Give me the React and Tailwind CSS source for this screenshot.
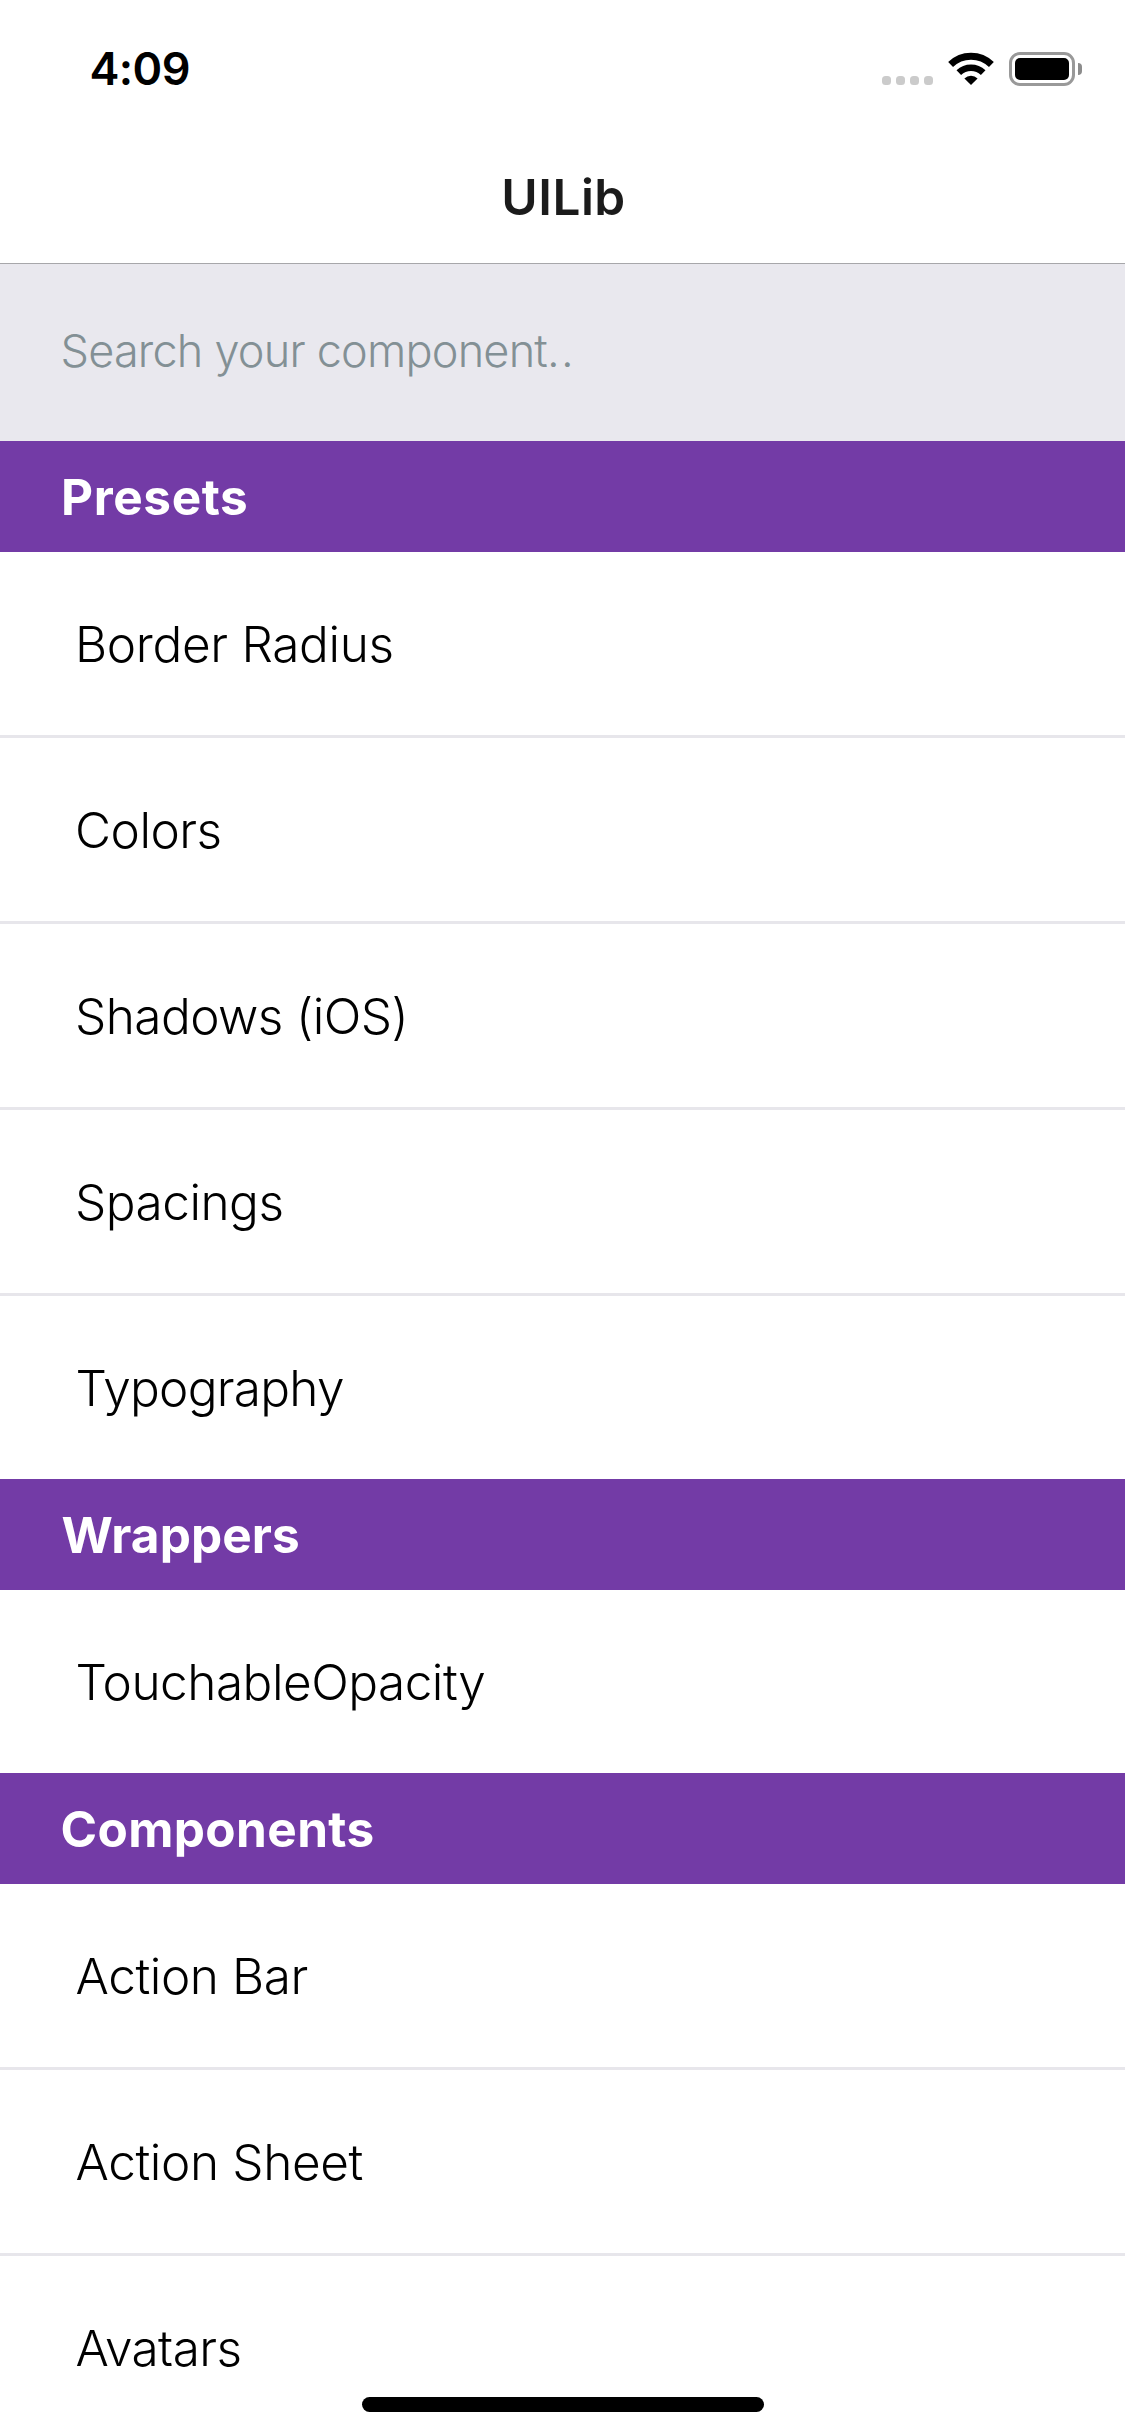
import React from "react";

const sections = [
  {
    title: "Presets",
    tracking: "tracking-[0.6px] pl-[61px]",
    items: [
      { label: "Border Radius", tracking: "tracking-[-0.32px] pl-[75px]" },
      { label: "Colors", tracking: "tracking-[-0.5px] pl-[75px]" },
      { label: "Shadows (iOS)", tracking: "tracking-[-0.57px] pl-[75px]" },
      { label: "Spacings", tracking: "tracking-[-0.5px] pl-[75px]" },
      { label: "Typography", tracking: "tracking-[-0.73px] pl-[75.5px]" },
    ],
  },
  {
    title: "Wrappers",
    tracking: "tracking-[0.08px] pl-[61.5px]",
    items: [{ label: "TouchableOpacity", tracking: "tracking-[-0.5px] pl-[75.5px]" }],
  },
  {
    title: "Components",
    tracking: "tracking-[0.38px] pl-[60.5px]",
    items: [
      { label: "Action Bar", tracking: "tracking-[-0.42px] pl-[75.5px]" },
      { label: "Action Sheet", tracking: "tracking-[-0.39px] pl-[75.5px]" },
      { label: "Avatars", tracking: "tracking-[-0.55px] pl-[75.5px]" },
    ],
  },
];

function WifiIcon() {
  return (
    <svg className="ml-[15px] h-[33px] w-[46px]" viewBox="0 0 46 33" fill="none" stroke="#000">
      <path d="M2.6 12.4 A29.3 29.3 0 0 1 43.4 12.4" strokeWidth="7" />
      <path d="M10.8 20.7 A17.6 17.6 0 0 1 35.2 20.7" strokeWidth="6.6" />
      <path d="M16.4 26.4 A9.6 9.6 0 0 1 29.6 26.4 L23 33 Z" fill="#000" stroke="none" />
    </svg>
  );
}

function StatusBar() {
  return (
    <header className="flex h-[132px] items-start justify-between pr-[43px] pl-[89.5px]">
      <span className="mt-[41px] text-[45px] leading-[56px] font-semibold tracking-[-0.6px] text-black">
        4:09
      </span>
      <div className="mt-[52px] flex">
        <div className="mt-6 flex gap-[5px]">
          {[0, 1, 2, 3].map((dot) => (
            <i key={dot} className="size-[9px] rounded-[3.5px] bg-[#cbcbcb]" />
          ))}
        </div>
        <WifiIcon />
        <div className="ml-[15px] h-[34px] w-[66px] rounded-[11px] border-[3px] border-[#999] p-[3px]">
          <div className="h-full rounded-[5px] bg-black" />
        </div>
        <div className="mt-[11px] ml-[3px] h-[12px] w-1 rounded-r-full bg-[#8c8c8c]" />
      </div>
    </header>
  );
}

function Section({ title, tracking, items }) {
  return (
    <section>
      <h2
        className={`flex h-[111px] items-center bg-[#733ba6] pt-[2px] text-[49.5px] font-bold text-white ${tracking}`}
      >
        {title}
      </h2>
      <ul>
        {items.map((item) => (
          <li
            key={item.label}
            className="box-content h-[183px] border-b-[3px] border-[#e7e6eb] last:border-b-0"
          >
            <div className={`flex h-full items-center pt-[2px] text-[49.5px] font-[330] text-black ${item.tracking}`}>
              {item.label}
            </div>
          </li>
        ))}
      </ul>
    </section>
  );
}

export default function App() {
  return (
    <div className="relative h-[2436px] w-[1125px] overflow-hidden bg-white font-['Inter',sans-serif]">
      <StatusBar />
      <div className="flex h-[132px] items-center justify-center border-b border-[#a7a7aa] pl-[2px] text-[49.5px] font-semibold tracking-[0.5px] text-[#1b1b1b]">
        <h1>UILib</h1>
      </div>
      <div className="flex h-[177px] items-center bg-[#e9e8ee] pb-[3px] pl-[60.5px] text-[45px] font-[330] tracking-[-0.78px] text-[#839095]">
        Search your component<span className="tracking-[1.2px]">..</span>
      </div>
      {sections.map((section) => (
        <Section key={section.title} {...section} />
      ))}
      <div className="absolute bottom-6 left-[362px] h-[15px] w-[402px] rounded-full bg-black" />
    </div>
  );
}
